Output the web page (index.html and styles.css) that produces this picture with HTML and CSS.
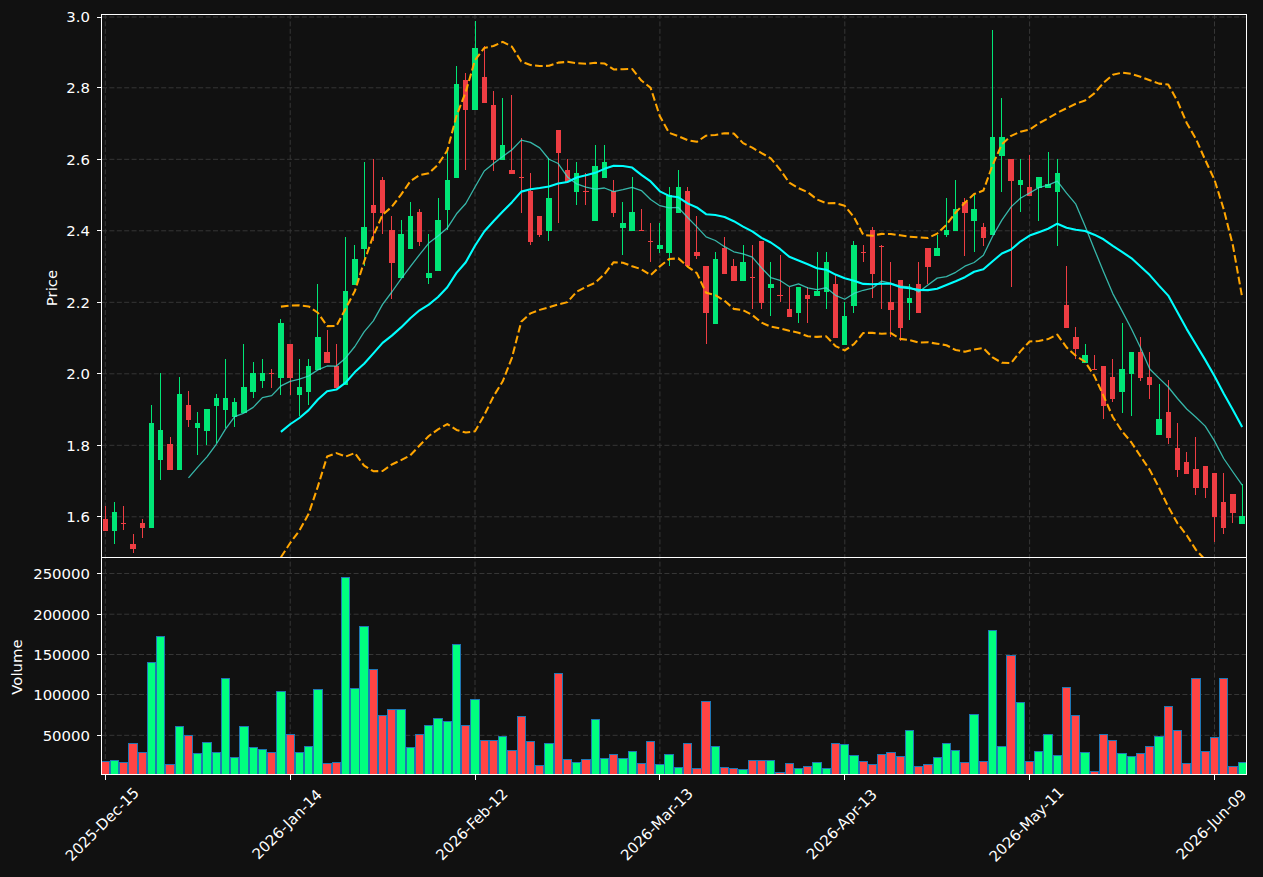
FILE: index.html
```html
<!DOCTYPE html>
<html lang="en">
<head>
<meta charset="utf-8">
<title>Price and volume chart</title>
<link rel="stylesheet" href="styles.css">
</head>
<body>
<svg class="figure" id="figure" width="1263" height="877" viewBox="0 0 1263 877" xmlns="http://www.w3.org/2000/svg">
  <defs>
    <clipPath id="clip-price"><rect x="101.5" y="14" width="1144.5" height="543"></rect></clipPath>
    <clipPath id="clip-volume"><rect x="101.5" y="557" width="1144.5" height="217"></rect></clipPath>
  </defs>

  <g class="grid">
    <path d="M102 17H1246M102 87.8H1246M102 159.3H1246M102 230.8H1246M102 302.3H1246M102 373.8H1246M102 445.3H1246M102 516.8H1246"></path>
    <path d="M102 573.5H1246M102 614.2H1246M102 654.5H1246M102 694.5H1246M102 735.3H1246"></path>
    <path d="M105.3 14V774M290.2 14V774M475 14V774M659.9 14V774M844.8 14V774M1029.6 14V774M1214.5 14V774"></path>
  </g>

  <g id="candles" clip-path="url(#clip-price)"></g>
  <g id="lines" clip-path="url(#clip-price)"></g>
  <g id="volume" clip-path="url(#clip-volume)"></g>

  <g class="axis">
    <path d="M101.5 14.5H1246.5V774.5H101.5ZM101.5 557.5H1246.5"></path>
    <path d="M96.6 17.5H101.5M96.6 87.5H101.5M96.6 159.5H101.5M96.6 230.5H101.5M96.6 302.5H101.5M96.6 373.5H101.5M96.6 445.5H101.5M96.6 516.5H101.5"></path>
    <path d="M96.6 573.5H101.5M96.6 614.5H101.5M96.6 654.5H101.5M96.6 694.5H101.5M96.6 735.5H101.5"></path>
    <path d="M105.5 774V779.5M290.5 774V779.5M475.5 774V779.5M659.5 774V779.5M844.5 774V779.5M1029.5 774V779.5M1214.5 774V779.5"></path>
  </g>

  <g class="labels labels-y">
    <text x="90" y="22">3.0</text>
    <text x="90" y="93.4">2.8</text>
    <text x="90" y="164.9">2.6</text>
    <text x="90" y="236.4">2.4</text>
    <text x="90" y="307.9">2.2</text>
    <text x="90" y="379.4">2.0</text>
    <text x="90" y="450.9">1.8</text>
    <text x="90" y="522.4">1.6</text>
    <text x="90" y="579.1">250000</text>
    <text x="90" y="619.8">200000</text>
    <text x="90" y="660.1">150000</text>
    <text x="90" y="700.1">100000</text>
    <text x="90" y="740.9">50000</text>
  </g>

  <g class="labels labels-title">
    <text transform="translate(57 288) rotate(-90)">Price</text>
    <text transform="translate(22 667) rotate(-90)">Volume</text>
  </g>

  <g class="labels labels-x">
    <text transform="translate(105.8 828) rotate(-45)">2025-Dec-15</text>
    <text transform="translate(290.7 828) rotate(-45)">2026-Jan-14</text>
    <text transform="translate(475.5 828) rotate(-45)">2026-Feb-12</text>
    <text transform="translate(660.4 828) rotate(-45)">2026-Mar-13</text>
    <text transform="translate(845.3 828) rotate(-45)">2026-Apr-13</text>
    <text transform="translate(1030.1 828) rotate(-45)">2026-May-11</text>
    <text transform="translate(1215 828) rotate(-45)">2026-Jun-09</text>
  </g>
</svg>
<script src="chart.js"></script>
</body>
</html>
```

FILE: styles.css
```css
html, body {
  margin: 0;
  padding: 0;
  background: #111111;
}

.figure {
  display: block;
}

.grid path {
  fill: none;
  stroke: #363636;
  stroke-width: 1;
  stroke-dasharray: 5 2.4;
}

.axis path {
  fill: none;
  stroke: #ffffff;
  stroke-width: 1.2;
  shape-rendering: crispEdges;
}

.labels text {
  font-family: "DejaVu Sans", sans-serif;
  font-size: 14.9px;
  fill: #ffffff;
}

.labels-y text {
  text-anchor: end;
}

.labels-title text,
.labels-x text {
  text-anchor: middle;
}

.wick {
  stroke-width: 1;
  shape-rendering: crispEdges;
}

.body {
  shape-rendering: crispEdges;
}

.up .wick { stroke: #00e676; }
.up .body { fill: #00e676; }
.down .wick { stroke: #ee3d43; }
.down .body { fill: #ee3d43; }

.bar {
  stroke: #1f77b4;
  stroke-width: 1;
  shape-rendering: crispEdges;
}

.bar.up { fill: #00ff7f; }
.bar.down { fill: #ff4444; }

.line {
  fill: none;
  stroke-linejoin: round;
}

.line-fast {
  stroke: #40e0d0;
  stroke-width: 1.3;
  opacity: 0.8;
}

.line-slow {
  stroke: #00ffff;
  stroke-width: 2.1;
}

.line-band {
  stroke: #ffa500;
  stroke-width: 2.05;
  stroke-dasharray: 7.7 3.3;
}
```

FILE: chart.js
```js
// Each row: direction, wick top, body top, body bottom, wick bottom, volume bar top (all in px).
var rows = [
  ['r',505.7,519,530.7,531,761.3],['g',502,512,530.7,544,760.3],['r',505.7,523.3,523.3,530,762.3],['r',534.3,544,548.7,552.7,743.3],
  ['r',519.3,523,527.7,537.7,752.3],['g',405.3,423,527.7,527.7,662.3],['g',373.3,430,459.7,480.3,636.3],['r',437.3,444,469.7,469.7,764.3],
  ['g',377.3,394,469.7,469.7,726.3],['r',391.3,405,419.7,427.3,735.3],['g',412.3,423,427.7,455.3,753.3],['g',409,409,430.7,444.7,742.3],
  ['g',394.3,398,405.7,443.3,752.3],['g',359.3,398,409.7,428.3,678.3],['g',398.3,402,416.7,427.3,757.3],['g',344.3,387,412.7,412.7,726.3],
  ['g',362.3,373,391.7,398.3,747.3],['g',359.3,373,380.7,387.7,749.3],['r',369.3,373.3,373.3,387.7,752.3],['g',319.3,323,377.7,394.7,691.3],
  ['r',344,344,377.7,394.7,734.3],['g',359.3,387,395,415.7,752.3],['g',359.3,366,391.7,405.3,746.3],['g',284.3,337,370.3,370.3,689.3],
  ['r',330.3,352,363,363,763.3],['r',344.3,366,388,388,762.3],['g',237.3,291,384.7,384.7,577.3],['g',245.3,259,285,285,688.3],
  ['g',162.3,227,248.7,266.3,626.3],['r',159.3,205,213,241.3,669.3],['r',177.3,180,213,234.3,715.3],['r',216.3,230,263,299,709.3],
  ['g',220.3,234,278,278,709.3],['g',202.3,216,248.7,248.7,747.3],['r',209.3,212,242,245.7,734.3],['g',234.3,273,278,284.3,725.3],
  ['g',198.3,220,271,271,718.3],['g',149.3,180,210,230,721.3],['g',66.3,84,178,178,644.3],['r',73.3,80,110,170.3,725.3],
  ['g',20.7,48,110,110,699.3],['r',46,77,103,103,740.3],['r',91.3,105,160,170.7,740.3],['g',98.3,145,160,160,736.3],
  ['r',95.3,170,174,174,750.3],['r',138,177.3,177.3,212.7,716.3],['r',173.3,191,242,245.3,741.3],['r',216,216,235,237.3,765.3],
  ['g',158.3,198,231,241.3,743.3],['r',130,130,153,223.3,673.3],['r',159.3,170,182.3,182.3,759.3],['g',162.3,173,191.7,205.3,762.3],
  ['r',173.3,191.3,191.3,205.3,759.3],['g',145.3,166,221,221,719.3],['g',145.3,162,178,178,758.3],['r',180.3,191,213,216.7,754.3],
  ['g',202.3,223,228,255.3,758.3],['g',177.3,212,231,231,751.3],['r',209.3,230.3,230.3,230.3,763.3],['r',223.3,241.3,241.3,262.3,741.3],
  ['g',223.3,245,249,252.7,764.3],['g',187.3,195,253,266.3,754.3],['g',170.3,187,213,213,767.3],['r',187.3,191,266.3,266.3,743.3],
  ['r',216.3,252,256,259.3,768.3],['r',266,266,313,344.3,701.3],['g',252.3,259,324,324,746.3],['r',237.3,248,274,274,767.3],
  ['r',259.3,266,281,281,768.3],['g',245.3,262,281,281,769.3],['r',245.3,277.3,277.3,309.3,760.3],['r',241,241,303,309.3,760.3],
  ['g',262.3,284,288,316.3,760.3],['r',255.3,295.3,295.3,302.3,772.3],['r',287.3,309,317,317,763.3],['g',287,287,313,323.3,768.3],
  ['r',287.3,295,299,323.3,766.3],['g',252.3,291,296,296,762.3],['g',252.3,262,292,309.3,768.3],['r',275.3,284,338,338,743.3],
  ['g',302.3,316,345,345,744.3],['g',241.3,245,306,313,755.3],['r',245.3,252.3,252.3,262.3,761.3],['r',227.3,230,274,298.3,764.3],
  ['r',245.3,246,246,309.3,754.3],['r',262.3,302,310,337.3,752.3],['r',280,280,328,341.3,756.3],['g',284.3,298,303,319.7,730.3],
  ['r',262.3,284,313,313,766.3],['r',248,248,267,284.3,764.3],['g',235,248,256,256,757.3],['g',198.3,230,235,237.3,743.3],
  ['g',180.3,209,231,231,750.3],['r',198.3,202,213,255.7,762.3],['g',195.3,209,221,252.3,714.3],['r',223.3,227,238,245.7,761.3],
  ['g',30.3,137,235,235,630.3],['g',98.3,137,156,191.7,746.3],['r',159,159,181,287.3,655.3],['g',159.3,180,185,212.3,702.3],
  ['r',155.3,187,195.7,195.7,761.3],['g',177,177,188,220.7,751.3],['g',152.3,184,188,188,734.3],['g',159.3,173,192,245.7,755.3],
  ['r',266.3,305,328,328,687.3],['r',327.3,337,349,359.3,715.3],['g',344.3,355,363,363,752.3],['r',355.3,369.3,369.3,370,771.3],
  ['r',366,366,406,419.3,734.3],['r',359.3,377,399,402.3,740.3],['g',323.3,369,392,412.7,753.3],['g',352,352,374,416.3,756.3],
  ['r',337.3,352,378,380.7,753.3],['r',352.3,377,385,398.7,746.3],['g',384.3,419,435,435,736.3],['r',380.3,412,438,444.3,706.3],
  ['r',423.3,448,470,477.3,730.3],['r',452.3,462,474,474,763.3],['r',437.3,469,488,494.7,678.3],['r',466,466,488,498.3,751.3],
  ['r',473,473,517,541.7,737.3],['r',473.3,502,528,534.3,678.3],['r',494,494,513,523.3,766.3],['g',484.3,516,524,524,762.3]
];

var X0 = 105.3, STEP = 9.243, BOTTOM = 774;
var xAt = function (i) { return X0 + STEP * i; };
var fix = function (n) { return n.toFixed(2); };

var closes = rows.map(function (r) { return r[0] === 'g' ? r[2] : r[3]; });

function windowStats(end, size) {
  var slice = closes.slice(end - size + 1, end + 1);
  var mean = slice.reduce(function (a, b) { return a + b; }, 0) / size;
  var sq = slice.reduce(function (a, b) { return a + (b - mean) * (b - mean); }, 0);
  return { mean: mean, std: Math.sqrt(sq / size) };
}

function polyline(cls, size, pick) {
  var pts = [];
  for (var i = size - 1; i < rows.length; i++) {
    pts.push(fix(xAt(i)) + ',' + fix(pick(windowStats(i, size))));
  }
  return '<polyline class="line ' + cls + '" points="' + pts.join(' ') + '"></polyline>';
}

var candleHtml = '', volumeHtml = '';
rows.forEach(function (r, i) {
  var cls = r[0] === 'g' ? 'up' : 'down';
  var x = xAt(i);
  var h = Math.max(r[3] - r[2], 1);
  var cx = Math.round(x - 0.5) + 0.5;
  candleHtml += '<g class="' + cls + '">' +
    '<line class="wick" x1="' + cx + '" x2="' + cx + '" y1="' + r[1] + '" y2="' + Math.max(r[4], r[2] + h) + '"></line>' +
    '<rect class="body" x="' + fix(x - 2.7) + '" y="' + r[2] + '" width="5.4" height="' + fix(h) + '"></rect></g>';
  var top = r[5] + 0.5;
  volumeHtml += '<rect class="bar ' + cls + '" x="' + fix(x - 4.15) + '" y="' + top + '" width="8.3" height="' + fix(BOTTOM - top) + '"></rect>';
});

document.getElementById('candles').innerHTML = candleHtml;
document.getElementById('volume').innerHTML = volumeHtml;
document.getElementById('lines').innerHTML =
  polyline('line-fast', 10, function (s) { return s.mean; }) +
  polyline('line-slow', 20, function (s) { return s.mean; }) +
  polyline('line-band', 20, function (s) { return s.mean - 2 * s.std; }) +
  polyline('line-band', 20, function (s) { return s.mean + 2 * s.std; });
```
